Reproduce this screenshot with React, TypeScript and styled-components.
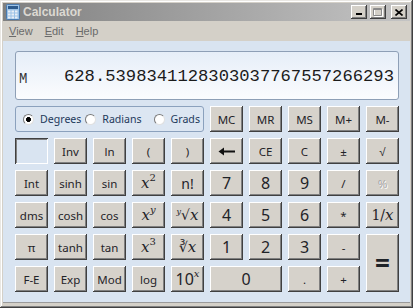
import React from "react";
import styled, { createGlobalStyle } from "styled-components";

const GlobalStyle = createGlobalStyle`
  html, body { margin: 0; padding: 0; background: #d4d0c8; }
  body { font-family: "Noto Sans", "Liberation Sans", sans-serif; }
`;

type KeyDef = {
  label: React.ReactNode;
  size?: number;
  colSpan?: number;
  rowSpan?: number;
  disabled?: boolean;
  blank?: boolean;
};

const Window = styled.div`
  width: 413px;
  height: 308px;
  box-sizing: border-box;
  padding: 3px 3px 5px 3px;
  background: #d4d0c8;
  box-shadow: inset -1px -1px #404040, inset 1px 1px #e9e7e3, inset -2px -2px #808080, inset 2px 2px #ffffff;
  display: flex;
  flex-direction: column;
`;

const TitleBar = styled.div`
  height: 18px;
  display: flex;
  align-items: center;
  padding: 0 3px;
  gap: 3px;
  background: linear-gradient(to right, #808080, #c4c4c4);
`;

const TitleText = styled.span`
  flex: 1;
  font: bold 12px "Liberation Sans", Arial, sans-serif;
  color: #dcd9d2;
`;

const CaptionButton = styled.div<{ $gap?: boolean }>`
  width: 16px;
  height: 14px;
  box-sizing: border-box;
  margin-left: ${(p) => (p.$gap ? "2px" : "0")};
  background: #d4d0c8;
  box-shadow: inset -1px -1px #404040, inset 1px 1px #ffffff, inset -2px -2px #808080;
  display: flex;
  align-items: center;
  justify-content: center;
`;

const MenuBar = styled.div`
  height: 20px;
  display: flex;
  align-items: center;
  gap: 12px;
  padding-left: 6px;
  font: 11px "Liberation Sans", Arial, sans-serif;
  color: #6a6a6a;
`;

const MenuItem = styled.span`
  & u { text-decoration: underline; text-underline-offset: 1px; }
`;

const Client = styled.div`
  flex: 1;
  background: #d9e4f1;
  padding: 10px 11px 0 12px;
  border-bottom: 1px solid #9a9a9a;
`;

const Keypad = styled.div`
  display: grid;
  grid-template-columns: repeat(10, 33px);
  grid-template-rows: 49px repeat(6, 26px);
  gap: 6px;
`;

const Display = styled.div`
  grid-column: 1 / -1;
  box-sizing: border-box;
  border: 1px solid #8e9fb6;
  border-radius: 3px;
  background: linear-gradient(#e6eef8, #fbfcfe);
  display: flex;
  align-items: flex-end;
  justify-content: space-between;
  padding: 0 4px 13px 3px;
  font-family: "Liberation Mono", "DejaVu Sans Mono", monospace;
  color: #1b1b1b;
`;

const MemoryFlag = styled.span`
  font-size: 14px;
  line-height: 14px;
  color: #333;
`;

const Readout = styled.span`
  font-size: 17.2px;
  line-height: 18px;
`;

const AngleGroup = styled.div`
  grid-column: span 5;
  box-sizing: border-box;
  border: 1px solid #8ba1bd;
  border-radius: 3px;
  background: #dce6f2;
  display: flex;
  align-items: center;
  padding-left: 7px;
  font-size: 10.6px;
  color: #1e395b;
`;

const AngleOption = styled.label<{ $w: number }>`
  display: flex;
  align-items: center;
  gap: 6px;
  width: ${(p) => p.$w}px;
`;

const RadioDot = styled.span<{ $on?: boolean }>`
  flex: none;
  width: 11px;
  height: 11px;
  box-sizing: border-box;
  border-radius: 50%;
  border: 1px solid;
  border-color: #7a7a7a #e0e0e0 #e0e0e0 #7a7a7a;
  background: ${(p) => (p.$on ? "radial-gradient(circle, #000 0 2.2px, #fff 2.7px)" : "#fff")};
`;

const Key = styled.div<{ $size: number; $col: number; $row: number; $disabled?: boolean; $blank?: boolean }>`
  grid-column: span ${(p) => p.$col};
  grid-row: span ${(p) => p.$row};
  box-sizing: border-box;
  display: flex;
  align-items: center;
  justify-content: center;
  font-size: ${(p) => p.$size}px;
  white-space: nowrap;
  color: ${(p) => (p.$disabled ? "#a6a6a6" : "#1f2328")};
  text-shadow: ${(p) => (p.$disabled ? "1px 1px #fff" : "none")};
  background: ${(p) => (p.$blank ? "#d9e4f1" : "#d6d2cb")};
  box-shadow: ${(p) =>
    p.$blank
      ? "inset 1px 1px #404040, inset -1px -1px #ffffff, inset 2px 2px #808080"
      : "inset -1px -1px #404040, inset 1px 1px #ffffff, inset -2px -2px #808080"};
`;

const MathX = styled.i`
  font-family: "DejaVu Serif", "Liberation Serif", serif;
  font-size: 15px;
  font-style: italic;
`;

const Upright = styled.span`
  font-family: "DejaVu Serif", "Liberation Serif", serif;
  font-size: 14px;
`;

const Sup = styled.span<{ $italic?: boolean }>`
  position: relative;
  top: -6px;
  font-size: 10px;
  font-style: ${(p) => (p.$italic ? "italic" : "normal")};
  font-family: "DejaVu Serif", serif;
`;

const Index = styled.span`
  position: relative;
  top: -4px;
  font-size: 8px;
  font-style: italic;
  font-family: "DejaVu Serif", serif;
`;

const Root = styled.span`
  font-family: "DejaVu Sans", sans-serif;
  font-size: 14px;
`;

const BackArrow = () => (
  <svg width="18" height="9" viewBox="0 0 18 9">
    <path d="M5 3.5H17v2H5z" fill="#111" />
    <path d="M0.5 4.5L6 0.5v8z" fill="#111" />
  </svg>
);

const CalcIcon = () => (
  <svg width="14" height="16" viewBox="0 0 14 16">
    <rect x="0.5" y="0.5" width="13" height="15" rx="1" fill="#9cc2e6" stroke="#4a7bb0" />
    <rect x="2" y="2" width="10" height="3" fill="#2d5a8c" />
    {[0, 1, 2].map((r) =>
      [0, 1, 2].map((c) => (
        <rect key={`${r}-${c}`} x={2 + c * 3.5} y={6.5 + r * 3} width="2.5" height="2" fill="#e8eef5" />
      ))
    )}
  </svg>
);

const x = <MathX>x</MathX>;

const keys: KeyDef[] = [
  { label: "", blank: true },
  { label: "Inv" },
  { label: "ln" },
  { label: "(" },
  { label: ")" },
  { label: <BackArrow /> },
  { label: "CE" },
  { label: "C" },
  { label: "±" },
  { label: "√" },

  { label: "Int" },
  { label: "sinh" },
  { label: "sin" },
  { label: <>{x}<Sup>2</Sup></> },
  { label: "n!", size: 14 },
  { label: "7", size: 16 },
  { label: "8", size: 16 },
  { label: "9", size: 16 },
  { label: "/" },
  { label: "%", disabled: true },

  { label: "dms" },
  { label: "cosh" },
  { label: "cos" },
  { label: <>{x}<Sup $italic>y</Sup></> },
  { label: <><Index>y</Index><Root>√</Root>{x}</> },
  { label: "4", size: 16 },
  { label: "5", size: 16 },
  { label: "6", size: 16 },
  { label: "*" },
  { label: <><Upright>1/</Upright>{x}</> },

  { label: "π" },
  { label: "tanh" },
  { label: "tan" },
  { label: <>{x}<Sup>3</Sup></> },
  { label: <><Root>∛</Root>{x}</> },
  { label: "1", size: 16 },
  { label: "2", size: 16 },
  { label: "3", size: 16 },
  { label: "-" },
  { label: <b>=</b>, size: 26, rowSpan: 2 },

  { label: "F-E" },
  { label: "Exp" },
  { label: "Mod" },
  { label: "log" },
  { label: <>10<Sup $italic>x</Sup></>, size: 16 },
  { label: "0", size: 16, colSpan: 2 },
  { label: "." },
  { label: "+" },
];

const memory = ["MC", "MR", "MS", "M+", "M-"];

export default function App() {
  return (
    <>
      <GlobalStyle />
      <Window>
        <TitleBar>
          <CalcIcon />
          <TitleText>Calculator</TitleText>
          <CaptionButton>
            <svg width="8" height="8" viewBox="0 0 8 8"><rect x="1" y="5" width="6" height="2" fill="#000" /></svg>
          </CaptionButton>
          <CaptionButton>
            <svg width="10" height="9" viewBox="0 0 10 9">
              <path d="M0.5 0.5h8v7h-8z" fill="none" stroke="#fff" transform="translate(1 1)" />
              <path d="M0.5 0.5h8v7h-8z M0.5 1.5h8" fill="none" stroke="#8a8a8a" />
            </svg>
          </CaptionButton>
          <CaptionButton $gap>
            <svg width="8" height="7" viewBox="0 0 8 7">
              <path d="M0.5 0.5L7.5 6.5M7.5 0.5L0.5 6.5" stroke="#000" strokeWidth="1.6" />
            </svg>
          </CaptionButton>
        </TitleBar>
        <MenuBar>
          <MenuItem><u>V</u>iew</MenuItem>
          <MenuItem><u>E</u>dit</MenuItem>
          <MenuItem><u>H</u>elp</MenuItem>
        </MenuBar>
        <Client>
          <Keypad>
            <Display>
              <MemoryFlag>M</MemoryFlag>
              <Readout>628.5398341128303037767557266293</Readout>
            </Display>
            <AngleGroup>
              <AngleOption $w={63}><RadioDot $on />Degrees</AngleOption>
              <AngleOption $w={69}><RadioDot />Radians</AngleOption>
              <AngleOption $w={50}><RadioDot />Grads</AngleOption>
            </AngleGroup>
            {memory.map((m) => (
              <Key key={m} $size={11.5} $col={1} $row={1}>{m}</Key>
            ))}
            {keys.map((k, i) => (
              <Key
                key={i}
                $size={k.size ?? 11.5}
                $col={k.colSpan ?? 1}
                $row={k.rowSpan ?? 1}
                $disabled={k.disabled}
                $blank={k.blank}
              >
                {k.label}
              </Key>
            ))}
          </Keypad>
        </Client>
      </Window>
    </>
  );
}
